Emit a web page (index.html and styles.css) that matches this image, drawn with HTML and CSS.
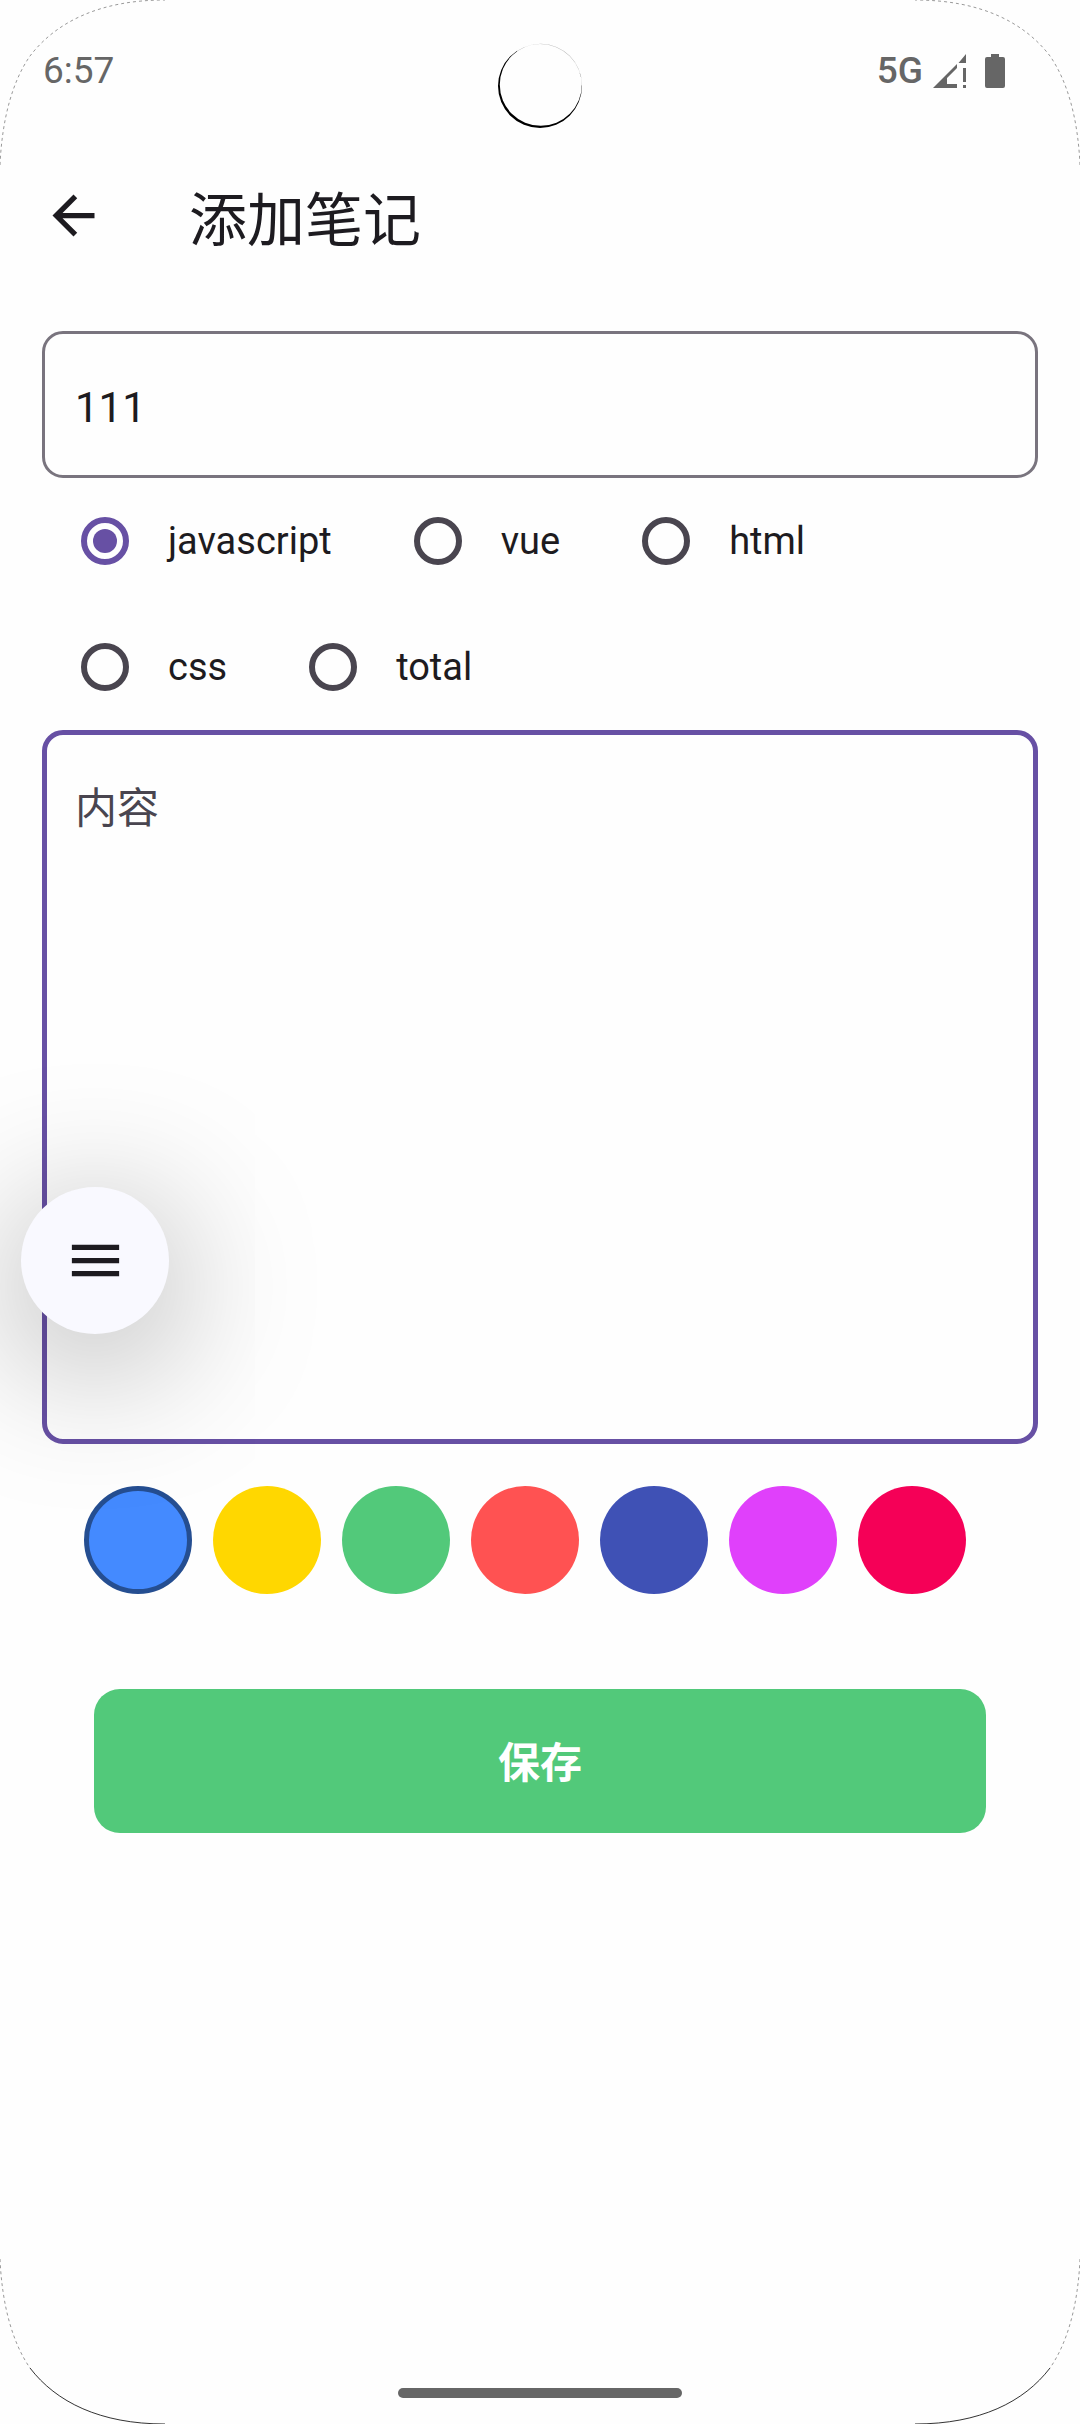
FILE: index.html
```html
<!DOCTYPE html>
<html lang="zh-CN">
<head>
  <meta charset="utf-8">
  <meta name="viewport" content="width=device-width, initial-scale=1">
  <title>添加笔记</title>
  <link rel="stylesheet" href="styles.css">
</head>
<body>
  <div class="screen">
    <div class="status-bar">
      <span class="clock">6:57</span>
      <div class="indicators">
        <span class="network">5G</span>
        <svg class="signal" viewBox="0 0 33 34" aria-hidden="true">
          <path d="M33 0V9H25.500Z M24 10V14L14 24V30H24V34H0Z M30 14H33V28H30Z M30 31H33V34H30Z"/>
        </svg>
        <svg class="battery" viewBox="0 0 20 34" aria-hidden="true">
          <path d="M6 0H14V3H18Q20 3 20 5V32Q20 34 18 34H2Q0 34 0 32V5Q0 3 2 3H6Z"/>
        </svg>
      </div>
    </div>

    <header class="app-bar">
      <button class="icon-button" type="button" aria-label="返回">
        <svg class="icon" viewBox="0 0 24 24" aria-hidden="true">
          <path d="M20 11H7.830l5.590-5.590L12 4l-8 8 8 8 1.410-1.410L7.830 13H20v-2z"/>
        </svg>
      </button>
      <h1 class="title">添加笔记</h1>
    </header>

    <form class="note-form">
      <input class="field" type="text" value="111" aria-label="标题">

      <div class="tags" role="radiogroup" aria-label="分类">
        <label class="tag"><input class="radio" type="radio" name="tag" checked>javascript</label>
        <label class="tag"><input class="radio" type="radio" name="tag">vue</label>
        <label class="tag"><input class="radio" type="radio" name="tag">html</label>
        <label class="tag"><input class="radio" type="radio" name="tag">css</label>
        <label class="tag"><input class="radio" type="radio" name="tag">total</label>
      </div>

      <textarea class="field content" placeholder="内容" aria-label="内容"></textarea>

      <div class="swatches" role="radiogroup" aria-label="颜色">
        <input class="swatch blue" type="radio" name="color" aria-label="蓝色" checked>
        <input class="swatch gold" type="radio" name="color" aria-label="金色">
        <input class="swatch green" type="radio" name="color" aria-label="绿色">
        <input class="swatch red" type="radio" name="color" aria-label="红色">
        <input class="swatch indigo" type="radio" name="color" aria-label="靛蓝">
        <input class="swatch purple" type="radio" name="color" aria-label="紫色">
        <input class="swatch pink" type="radio" name="color" aria-label="粉色">
      </div>

      <button class="save" type="button">保存</button>
    </form>

    <div class="home-bar"></div>

    <button class="fab" type="button" aria-label="菜单">
      <svg class="icon" viewBox="0 0 24 24" aria-hidden="true">
        <path d="M3 18h18v-2H3v2zm0-5h18v-2H3v2zm0-7v2h18V6H3z"/>
      </svg>
    </button>

    <svg class="camera" viewBox="0 0 86 86" aria-hidden="true">
      <path fill-rule="evenodd" d="M1 43a42 42 0 1 0 84 0a42 42 0 1 0 -84 0Z M2.800 41.800a41 41 0 1 0 82 0a41 41 0 1 0 -82 0Z"/>
      <path class="glare" d="M20 8A42 42 0 0 1 83 30"/>
    </svg>
    <svg class="corner top left" viewBox="0 0 165 165" aria-hidden="true"><path d="M0 165C2 120 12 82 30 56C56 22 100 0 165 0"/></svg>
    <svg class="corner top right" viewBox="0 0 165 165" aria-hidden="true"><path d="M165 165C163 120 153 82 135 56C109 22 65 0 0 0"/></svg>
    <svg class="corner bottom left" viewBox="0 0 165 165" aria-hidden="true"><path d="M0 0C2 45 12 83 30 109"/><path class="solid" d="M30 109C56 143 100 165 165 165"/></svg>
    <svg class="corner bottom right" viewBox="0 0 165 165" aria-hidden="true"><path d="M165 0C163 45 153 83 135 109"/><path class="solid" d="M135 109C109 143 65 165 0 165"/></svg>
  </div>
</body>
</html>
```
FILE: styles.css
```css
:root {
  --ink: #1d1b20;
  --muted: #49454f;
  --outline: #79747e;
  --primary: #6750a4;
  --system: #666666;
  --green: #52c97a;
}

*,
*::before {
  box-sizing: border-box;
}

body {
  margin: 0;
  background: #fefefe;
  color: var(--ink);
  font-family: Roboto, "Noto Sans CJK SC", sans-serif;
}

button,
input,
textarea {
  margin: 0;
  font: inherit;
  color: inherit;
}

button {
  padding: 0;
  border: 0;
  background: none;
}

.screen {
  position: relative;
  display: flex;
  flex-direction: column;
  min-height: 100vh;
  overflow: hidden;
}

.status-bar {
  display: flex;
  justify-content: space-between;
  align-items: center;
  height: 142px;
  padding: 0 75px 0 43px;
  color: var(--system);
  font-size: 37px;
  line-height: 44px;
}

.indicators {
  display: flex;
  align-items: center;
  gap: 10px;
}

.network {
  font-weight: 500;
}

.signal,
.battery {
  height: 34px;
  fill: currentColor;
}

.signal {
  width: 33px;
  margin-right: 9px;
}

.battery {
  width: 20px;
}

.app-bar {
  display: flex;
  align-items: center;
  gap: 84px;
  height: 147px;
  padding: 0 42px;
}

.icon-button {
  display: flex;
}

.icon {
  width: 63px;
  height: 63px;
  fill: var(--ink);
}

.title {
  margin: 0;
  padding-top: 10px;
  font-size: 58px;
  font-weight: 400;
  line-height: 72px;
}

.note-form {
  display: flex;
  flex-direction: column;
  padding: 42px;
}

.field {
  width: 100%;
  height: 147px;
  padding: 6px 30px 0;
  border: 3px solid var(--outline);
  border-radius: 21px;
  outline: 0;
  background: transparent;
  font-size: 42px;
  line-height: 63px;
}

.tags {
  display: flex;
  flex-wrap: wrap;
  column-gap: 43px;
  padding-right: 126px;
}

.tag {
  display: flex;
  align-items: center;
  height: 126px;
  font-size: 38px;
}

.radio {
  appearance: none;
  display: grid;
  place-items: center;
  width: 48px;
  height: 48px;
  margin: 0 39px;
  border: 6px solid var(--muted);
  border-radius: 50%;
}

.radio:checked {
  border-color: var(--primary);
}

.radio:checked::before {
  content: "";
  width: 24px;
  height: 24px;
  border-radius: 50%;
  background: var(--primary);
}

.content {
  display: block;
  height: 714px;
  padding: 42px 28px;
  border: 5px solid var(--primary);
  resize: none;
}

.content::placeholder {
  color: var(--muted);
  opacity: 1;
}

.swatches {
  display: flex;
  flex-wrap: wrap;
  gap: 21px;
  padding: 42px;
}

.swatch {
  appearance: none;
  width: 108px;
  height: 108px;
  border-radius: 50%;
}

.swatch:checked {
  border: 5px solid #254e91;
}

.blue { background: #448aff; }
.gold { background: #ffd700; }
.green { background: var(--green); }
.red { background: #ff5252; }
.indigo { background: #3f51b5; }
.purple { background: #e040fb; }
.pink { background: #f50057; }

.save {
  height: 144px;
  margin: 53px 52px 0;
  padding-bottom: 3px;
  border-radius: 26px;
  background: var(--green);
  color: #ffffff;
  font-size: 42px;
  font-weight: 700;
}

.home-bar {
  width: 284px;
  height: 10px;
  margin: auto auto 26px;
  border-radius: 5px;
  background: var(--system);
}

.fab {
  position: absolute;
  top: 1187px;
  left: 21px;
  display: grid;
  place-items: center;
  width: 148px;
  height: 147px;
  border-radius: 50%;
  background: #f9f9ff;
  box-shadow: 0 26px 150px rgba(0, 0, 0, 0.38);
}

.camera {
  position: absolute;
  top: 43px;
  left: 50%;
  width: 86px;
  margin-left: -43px;
}

.glare {
  fill: none;
  stroke: #fefefe;
  stroke-opacity: 0.7;
  stroke-width: 3;
}

.corner {
  position: absolute;
  width: 165px;
  height: 165px;
  fill: none;
  stroke: #000000;
  stroke-dasharray: 3 3;
  stroke-opacity: 0.4;
  pointer-events: none;
}

.solid {
  stroke-dasharray: none;
  stroke-opacity: 0.8;
}

.top { top: 0; }
.bottom { bottom: 0; }
.left { left: 0; }
.right { right: 0; }
```
